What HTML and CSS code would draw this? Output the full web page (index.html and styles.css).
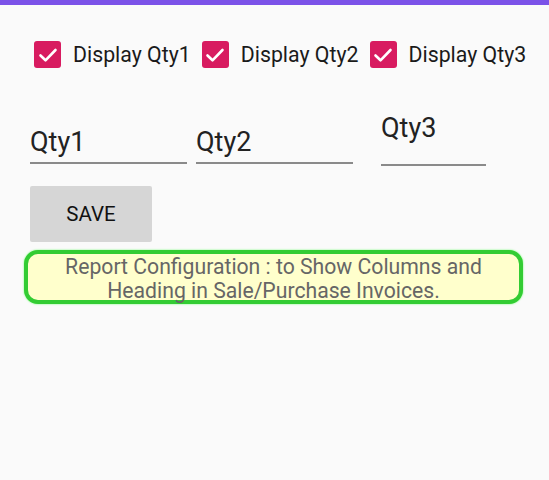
FILE: index.html
```html
<!DOCTYPE html>
<html>
<head>
<meta charset="utf-8">
<link rel="stylesheet" href="styles.css">
</head>
<body>
<div class="topbar"></div>
<div class="checks">
  <div class="check"><span class="box"><svg viewBox="0 0 24 24" width="24" height="24"><path d="M4.5 12.5l5 4.8L19.5 7" fill="none" stroke="#fff" stroke-width="2.6" stroke-linecap="round" stroke-linejoin="round"/></svg></span><span class="label">Display Qty1</span></div>
  <div class="check"><span class="box"><svg viewBox="0 0 24 24" width="24" height="24"><path d="M4.5 12.5l5 4.8L19.5 7" fill="none" stroke="#fff" stroke-width="2.6" stroke-linecap="round" stroke-linejoin="round"/></svg></span><span class="label">Display Qty2</span></div>
  <div class="check"><span class="box"><svg viewBox="0 0 24 24" width="24" height="24"><path d="M4.5 12.5l5 4.8L19.5 7" fill="none" stroke="#fff" stroke-width="2.6" stroke-linecap="round" stroke-linejoin="round"/></svg></span><span class="label">Display Qty3</span></div>
</div>
<div class="fields">
  <div class="field f1"><span class="ftext">Qty1</span></div>
  <div class="field f2"><span class="ftext">Qty2</span></div>
  <div class="field f3"><span class="ftext">Qty3</span></div>
</div>
<button class="save">SAVE</button>
<div class="note">Report Configuration : to Show Columns and<br>Heading in Sale/Purchase Invoices.</div>
</body>
</html>
```
FILE: styles.css
```css
html, body {
  margin: 0;
  padding: 0;
  background: #fafafa;
  font-family: Roboto, "Noto Sans", sans-serif;
  width: 549px;
  height: 480px;
  overflow: hidden;
}
.topbar {
  height: 5px;
  background: #7b52e8;
}
.checks {
  display: flex;
  align-items: center;
  padding-left: 34px;
  margin-top: 36px;
  gap: 11px;
}
.check {
  display: flex;
  align-items: center;
  gap: 12px;
}
.box {
  width: 27px;
  height: 27px;
  border-radius: 3px;
  background: #d81b60;
  display: flex;
  align-items: center;
  justify-content: center;
}
.label {
  font-size: 21.3px;
  color: #1a1a1a;
}
.fields {
  display: flex;
  align-items: flex-end;
  margin-top: 44px;
  padding-left: 30px;
}
.field {
  border-bottom: 2px solid #8a8a8a;
  box-sizing: border-box;
}
.ftext {
  display: block;
  font-size: 27px;
  color: #222;
  line-height: 32px;
}
.f1 { width: 157px; padding-bottom: 4px; }
.f2 { width: 157px; margin-left: 9px; padding-bottom: 4px; }
.f3 { width: 105px; margin-left: 28px; padding-bottom: 20px; margin-bottom: -2px; }
.save {
  display: block;
  margin: 22px 0 0 30px;
  width: 122px;
  height: 56px;
  border: none;
  border-radius: 2px;
  background: #d6d6d6;
  font-family: Roboto, "Noto Sans", sans-serif;
  font-size: 20.5px;
  font-weight: 400;
  color: #111;
  padding: 0;
}
.note {
  margin: 8px 26px 0 24px;
  height: 54px;
  box-sizing: border-box;
  border: 4px solid #33cc33;
  border-radius: 14px;
  box-shadow: 0 0 2px #66ff66;
  background: #ffffcc;
  color: #666;
  font-size: 21.2px;
  line-height: 24px;
  text-align: center;
  padding-top: 1px;
}
```
